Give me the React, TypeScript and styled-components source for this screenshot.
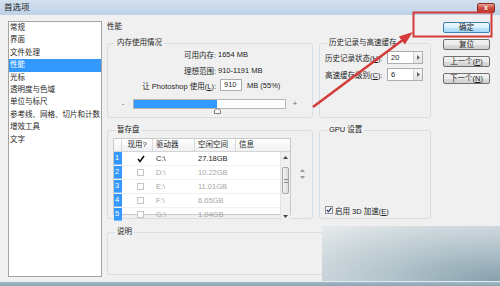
import React from "react";
import styled, { createGlobalStyle } from "styled-components";

const FONT = `"Liberation Sans", "Noto Sans CJK SC", sans-serif`;

const Global = createGlobalStyle`
  html, body { margin: 0; padding: 0; background: #f0f0f0; }
  body { font-family: ${FONT}; }
  * { box-sizing: border-box; }
`;

const Win = styled.div`
  position: relative;
  width: 500px;
  height: 286px;
  overflow: hidden;
  background: #f0f0f0;
  display: flex;
  flex-direction: column;
  font-family: ${FONT};
  font-size: 7.5px;
  color: #1e1e1e;
`;

const TitleBar = styled.div`
  flex: none;
  height: 15px;
  display: flex;
  align-items: flex-start;
  justify-content: space-between;
  padding: 0 5px 0 4px;
  background: linear-gradient(#d4e2f0, #bed1e6);
  font-size: 8.5px;
`;

const Title = styled.span`
  line-height: 15px;
  color: #1a1a1a;
`;

const CloseBtn = styled.div`
  width: 18px;
  height: 10px;
  margin-top: 3px;
  border: 1px solid #8b2c24;
  border-radius: 2px;
  background: linear-gradient(#e8a497, #cc4c3e 50%, #b9382c);
  color: #fff;
  font-size: 7px;
  font-weight: bold;
  line-height: 8px;
  text-align: center;
`;

const Body = styled.div`
  flex: 1;
  display: flex;
  align-items: flex-start;
  padding: 6px 0 0 8px;
`;

const Sidebar = styled.ul`
  flex: none;
  width: 94px;
  height: 256px;
  margin: 0;
  padding: 0;
  list-style: none;
  background: #fff;
  border: 1px solid #a3a3a3;
`;

const Item = styled.li<{ $sel?: boolean }>`
  height: 12.4px;
  line-height: 12.4px;
  padding-left: 1px;
  white-space: nowrap;
  background: ${(p) => (p.$sel ? "#3399ff" : "transparent")};
  color: ${(p) => (p.$sel ? "#fff" : "#1e1e1e")};
`;

const Main = styled.div`
  flex: none;
  width: 324px;
  margin-left: 5px;
  display: flex;
  flex-direction: column;
`;

const Heading = styled.div`
  height: 12px;
  line-height: 12px;
  margin-bottom: 5px;
`;

const Groups = styled.div`
  display: grid;
  grid-template-columns: 206px 112px;
  column-gap: 6px;
  row-gap: 7px;
`;

const Group = styled.fieldset<{ $h?: number; $end?: boolean; $mt?: number }>`
  margin: ${(p) => p.$mt ?? 0}px 0 0 0;
  min-width: 0;
  border: 1px solid #d5dfe5;
  border-radius: 3px;
  padding: 0 5px 3px;
  ${(p) => (p.$h ? `height: ${p.$h}px;` : "")}
  ${(p) =>
    p.$end
      ? "display: flex; flex-direction: column; justify-content: flex-end;"
      : ""}
`;

const Legend = styled.legend`
  padding: 0 2px;
  margin-left: 2px;
  height: 10px;
  line-height: 10px;
  font-size: 7.5px;
`;

const U = styled.span`
  text-decoration: underline;
`;

/* memory */
const MemRow = styled.div<{ $mt?: number }>`
  display: flex;
  align-items: center;
  height: 12px;
  margin-top: ${(p) => p.$mt ?? 0}px;
  white-space: nowrap;
`;

const MemLabel = styled.span`
  flex: none;
  width: 103px;
  text-align: right;
`;

const MemValue = styled.span`
  margin-left: 2px;
`;

const NumBox = styled.div<{ $w: number; $ml?: number }>`
  flex: none;
  width: ${(p) => p.$w}px;
  height: 12px;
  margin-left: ${(p) => p.$ml ?? 0}px;
  border: 1px solid #abadb3;
  background: #fff;
  padding-left: 3px;
  line-height: 10px;
`;

const Unit = styled.span`
  margin-left: 5px;
`;

const SliderRow = styled.div`
  display: flex;
  align-items: flex-start;
  height: 15px;
  margin-top: 8px;
`;

const SliderSign = styled.span<{ $w: number }>`
  flex: none;
  width: ${(p) => p.$w}px;
  text-align: center;
  line-height: 10px;
  color: #666;
`;

const Track = styled.div`
  position: relative;
  flex: none;
  width: 153px;
  height: 10px;
  border: 1px solid #b5b5b5;
  background: #fff;
`;

const Fill = styled.div`
  height: 100%;
  background: #3399ff;
`;

const Thumb = styled.svg`
  position: absolute;
  top: 8px;
  margin-left: -3px;
`;

/* history */
const HistRow = styled.div<{ $mt: number }>`
  display: flex;
  align-items: center;
  height: 13px;
  margin-top: ${(p) => p.$mt}px;
  white-space: nowrap;
`;

const HistLabel = styled.span`
  flex: none;
  width: 62px;
`;

const Popup = styled.div`
  flex: none;
  display: flex;
  width: 36px;
  height: 13px;
  border: 1px solid #abadb3;
  background: #fff;
`;

const PopupText = styled.span`
  flex: 1;
  padding-left: 3px;
  line-height: 11px;
`;

const PopupBtn = styled.span`
  flex: none;
  width: 9px;
  border-left: 1px solid #d0d0d0;
  background: linear-gradient(#f7f7f7, #e4e4e4);
  display: flex;
  align-items: center;
  justify-content: center;
`;

/* scratch */
const ScratchWrap = styled.div`
  display: flex;
  margin-top: 3px;
`;

const Table = styled.div`
  flex: none;
  width: 178px;
  height: 77px;
  border: 1px solid #c9c9c9;
  background: #fff;
  display: flex;
  flex-direction: column;
`;

const HeadRow = styled.div`
  display: grid;
  grid-template-columns: 8px 31px 42px 41px 1fr;
  height: 13px;
  background: linear-gradient(#ffffff, #f0f1f3);
  border-bottom: 1px solid #d5d5d5;
`;

const HeadCell = styled.div<{ $center?: boolean }>`
  border-right: 1px solid #d9d9d9;
  line-height: 12px;
  padding-left: ${(p) => (p.$center ? 0 : 3)}px;
  text-align: ${(p) => (p.$center ? "center" : "left")};
  white-space: nowrap;
  &:last-child {
    border-right: none;
  }
`;

const TBody = styled.div`
  flex: 1;
  display: flex;
`;

const Rows = styled.div`
  flex: 1;
  display: flex;
  flex-direction: column;
`;

const Row = styled.div<{ $dim?: boolean }>`
  flex: 1;
  display: grid;
  grid-template-columns: 8px 31px 42px 41px 1fr;
  align-items: center;
  color: ${(p) => (p.$dim ? "#a6a6a6" : "#1e1e1e")};
  border-bottom: 1px solid #f1f1f1;
  &:last-child {
    border-bottom: none;
  }
`;

const RowNum = styled.div`
  align-self: stretch;
  background: #3399ff;
  color: #fff;
  padding-left: 1px;
  line-height: 12px;
  border-bottom: 1px solid #7fbcff;
`;

const CheckCell = styled.div`
  display: flex;
  padding-left: 15px;
`;

const SmallBox = styled.span`
  display: block;
  width: 7px;
  height: 7px;
  border: 1px solid #c6c6c6;
  background: #fdfdfd;
`;

const Cell = styled.div`
  padding-left: 3px;
  white-space: nowrap;
`;

const Scrollbar = styled.div`
  flex: none;
  width: 10px;
  display: flex;
  flex-direction: column;
  justify-content: space-between;
  background: #f0f0f0;
  border-left: 1px solid #e4e4e4;
`;

const ScrollArrow = styled.div`
  height: 10px;
  display: flex;
  align-items: center;
  justify-content: center;
`;

const ScrollThumb = styled.div`
  height: 27px;
  margin: 0 1px 12px;
  border: 1px solid #a5a5a5;
  border-radius: 2px;
  background: linear-gradient(90deg, #f3f3f3, #dcdcdc);
  display: flex;
  align-items: center;
  justify-content: center;
`;

const Grip = styled.div`
  width: 4px;
  height: 4px;
  border-top: 1px solid #8a8a8a;
  border-bottom: 1px solid #8a8a8a;
`;

const MoveArrows = styled.div`
  flex: none;
  width: 10px;
  margin-left: 6px;
  padding-top: 31px;
  display: flex;
  flex-direction: column;
  align-items: center;
  gap: 4px;
`;

/* gpu */
const CheckRow = styled.label`
  display: flex;
  align-items: center;
  gap: 2px;
  height: 10px;
  white-space: nowrap;
`;

const CheckBox = styled.span`
  flex: none;
  width: 8px;
  height: 8px;
  border: 1px solid #8e8f8f;
  background: linear-gradient(#f3f3f3, #fcfcfc);
  display: flex;
  align-items: center;
  justify-content: center;
`;

/* buttons */
const Buttons = styled.div`
  flex: none;
  width: 47px;
  margin: 1px 0 0 12px;
  display: flex;
  flex-direction: column;
  gap: 6px;
`;

const Btn = styled.div<{ $primary?: boolean }>`
  height: 11px;
  border: 1px solid ${(p) => (p.$primary ? "#3c7fb1" : "#707070")};
  border-radius: 2px;
  background: ${(p) =>
    p.$primary
      ? "linear-gradient(#eaf6fd, #d9f0fc 50%, #bee6fd 51%, #a7d9f5)"
      : "linear-gradient(#f2f2f2, #ebebeb 50%, #dddddd 51%, #cfcfcf)"};
  text-align: center;
  line-height: 9px;
  white-space: nowrap;
`;

const BottomFrame = styled.div`
  flex: none;
  height: 5px;
  border-top: 1px solid #e0eaf0;
  background: linear-gradient(#a3bac6, #8aa4b1);
`;

const Watermark = styled.div`
  position: absolute;
  left: 322px;
  top: 226px;
  right: 0;
  bottom: 5px;
  background: radial-gradient(140% 130% at 100% 100%, #86a0ac 0%, #b2c3cb 45%, #e3e8ea 100%);
  pointer-events: none;
`;

const Annotation = styled.svg`
  position: absolute;
  left: 0;
  top: 0;
  pointer-events: none;
`;

const tri = (up: boolean, c = "#555") => (
  <svg width="5" height="3" viewBox="0 0 5 3">
    <polygon points={up ? "0,3 5,3 2.5,0" : "0,0 5,0 2.5,3"} fill={c} />
  </svg>
);

const drives = [
  { n: 1, d: "C:\\", s: "27.18GB", on: true },
  { n: 2, d: "D:\\", s: "10.22GB" },
  { n: 3, d: "E:\\", s: "11.01GB" },
  { n: 4, d: "F:\\", s: "6.65GB" },
  { n: 5, d: "G:\\", s: "1.04GB" },
];

const menu = [
  "常规",
  "界面",
  "文件处理",
  "性能",
  "光标",
  "透明度与色域",
  "单位与标尺",
  "参考线、网格、切片和计数",
  "增效工具",
  "文字",
];

export default function App() {
  const pct = 55;
  return (
    <Win>
      <Global />
      <TitleBar>
        <Title>首选项</Title>
        <CloseBtn>x</CloseBtn>
      </TitleBar>
      <Body>
        <Sidebar>
          {menu.map((m) => (
            <Item key={m} $sel={m === "性能"}>
              {m}
            </Item>
          ))}
        </Sidebar>
        <Main>
          <Heading>性能</Heading>
          <Groups>
            <Group>
              <Legend>内存使用情况</Legend>
              <MemRow>
                <MemLabel>可用内存:</MemLabel>
                <MemValue>1654 MB</MemValue>
              </MemRow>
              <MemRow $mt={4}>
                <MemLabel>理想范围:</MemLabel>
                <MemValue>910-1191 MB</MemValue>
              </MemRow>
              <MemRow $mt={3}>
                <MemLabel>
                  让 Photoshop 使用(<U>L</U>):
                </MemLabel>
                <NumBox $w={22} $ml={4}>910</NumBox>
                <Unit>MB (55%)</Unit>
              </MemRow>
              <SliderRow>
                <SliderSign $w={20}>-</SliderSign>
                <Track>
                  <Fill style={{ width: `${pct}%` }} />
                  <Thumb width="7" height="6" viewBox="0 0 7 6" style={{ left: `${pct}%` }}>
                    <polygon points="3.5,0.5 6.5,2.5 6.5,5.5 0.5,5.5 0.5,2.5" fill="#fff" stroke="#7a7a7a" strokeWidth="1" />
                  </Thumb>
                </Track>
                <SliderSign $w={18}>+</SliderSign>
              </SliderRow>
            </Group>

            <Group>
              <Legend>历史记录与高速缓存</Legend>
              <HistRow $mt={3}>
                <HistLabel>
                  历史记录状态(<U>H</U>):
                </HistLabel>
                <Popup>
                  <PopupText>20</PopupText>
                  <PopupBtn>
                    <svg width="3" height="5" viewBox="0 0 3 5">
                      <polygon points="0,0 3,2.5 0,5" fill="#666" />
                    </svg>
                  </PopupBtn>
                </Popup>
              </HistRow>
              <HistRow $mt={4}>
                <HistLabel>
                  高速缓存级别(<U>C</U>):
                </HistLabel>
                <Popup>
                  <PopupText>6</PopupText>
                  <PopupBtn>
                    <svg width="3" height="5" viewBox="0 0 3 5">
                      <polygon points="0,0 3,2.5 0,5" fill="#666" />
                    </svg>
                  </PopupBtn>
                </Popup>
              </HistRow>
            </Group>

            <Group>
              <Legend>暂存盘</Legend>
              <ScratchWrap>
                <Table>
                  <HeadRow>
                    <HeadCell />
                    <HeadCell $center>现用?</HeadCell>
                    <HeadCell>驱动器</HeadCell>
                    <HeadCell>空闲空间</HeadCell>
                    <HeadCell>信息</HeadCell>
                  </HeadRow>
                  <TBody>
                    <Rows>
                      {drives.map((r) => (
                        <Row key={r.n} $dim={!r.on}>
                          <RowNum>{r.n}</RowNum>
                          <CheckCell>
                            {r.on ? (
                              <svg width="8" height="8" viewBox="0 0 8 8">
                                <path d="M1 4 L3 6.5 L7 1" fill="none" stroke="#111" strokeWidth="1.6" />
                              </svg>
                            ) : (
                              <SmallBox />
                            )}
                          </CheckCell>
                          <Cell>{r.d}</Cell>
                          <Cell>{r.s}</Cell>
                          <Cell />
                        </Row>
                      ))}
                    </Rows>
                    <Scrollbar>
                      <ScrollArrow>{tri(true, "#444")}</ScrollArrow>
                      <ScrollThumb>
                        <Grip />
                      </ScrollThumb>
                      <ScrollArrow>{tri(false, "#444")}</ScrollArrow>
                    </Scrollbar>
                  </TBody>
                </Table>
                <MoveArrows>
                  {tri(true, "#9a9a9a")}
                  {tri(false, "#9a9a9a")}
                </MoveArrows>
              </ScratchWrap>
            </Group>

            <Group $end>
              <Legend>GPU 设置</Legend>
              <CheckRow>
                <CheckBox>
                  <svg width="6" height="6" viewBox="0 0 6 6">
                    <path d="M0.8 3 L2.4 4.8 L5.3 0.8" fill="none" stroke="#2a3e7a" strokeWidth="1.3" />
                  </svg>
                </CheckBox>
                <span>
                  启用 3D 加速(<U>E</U>)
                </span>
              </CheckRow>
            </Group>
          </Groups>
          <Group $h={48} $mt={8}>
            <Legend>说明</Legend>
          </Group>
        </Main>
        <Buttons>
          <Btn $primary>确定</Btn>
          <Btn>复位</Btn>
          <Btn>
            上一个(<U>P</U>)
          </Btn>
          <Btn>
            下一个(<U>N</U>)
          </Btn>
        </Buttons>
      </Body>
      <BottomFrame />
      <Watermark />
      <Annotation width="500" height="286" viewBox="0 0 500 286">
        <rect x="413.5" y="12.5" width="78" height="24" fill="none" stroke="#d23a3a" strokeWidth="2" />
        <line x1="313" y1="107" x2="404" y2="39" stroke="#d43c3c" strokeWidth="2.5" />
        <polygon points="413,32 404.8,44.4 398.8,36.4" fill="#d43c3c" />
      </Annotation>
    </Win>
  );
}
